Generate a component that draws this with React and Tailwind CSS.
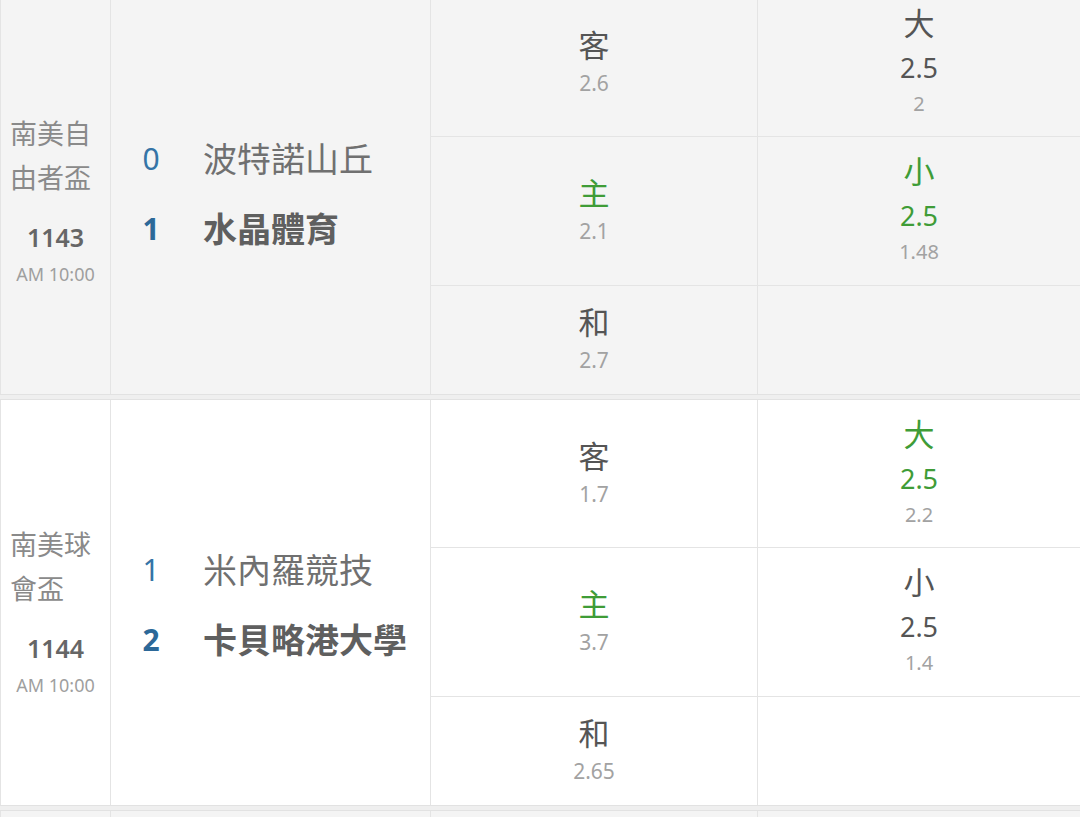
import React from 'react';

const matches = [
  {
    league: ['南美自', '由者盃'],
    no: '1143',
    time: 'AM 10:00',
    shade: true,
    away: { score: '0', name: '波特諾山丘' },
    home: { score: '1', name: '水晶體育' },
    odds: [
      { label: '客', value: '2.6' },
      { label: '主', value: '2.1', hot: true },
      { label: '和', value: '2.7' },
    ],
    totals: [
      { label: '大', line: '2.5', value: '2' },
      { label: '小', line: '2.5', value: '1.48', hot: true },
    ],
  },
  {
    league: ['南美球', '會盃'],
    no: '1144',
    time: 'AM 10:00',
    shade: false,
    away: { score: '1', name: '米內羅競技' },
    home: { score: '2', name: '卡貝略港大學' },
    odds: [
      { label: '客', value: '1.7' },
      { label: '主', value: '3.7', hot: true },
      { label: '和', value: '2.65' },
    ],
    totals: [
      { label: '大', line: '2.5', value: '2.2', hot: true },
      { label: '小', line: '2.5', value: '1.4' },
    ],
  },
];

const cellHeights = ['h-[148px]', 'h-[149px]', 'flex-1'];

function OddsCell({ item, idx }) {
  return (
    <div className={`${cellHeights[idx]} flex flex-col items-center justify-center ${idx < 2 ? 'border-b border-[#e4e4e4]' : ''}`}>
      {item && (
        <>
          <span className={`text-[31px] leading-[40px] ${item.hot ? 'text-[#3f9c37]' : 'text-[#555]'}`}>{item.label}</span>
          <span className="text-[21px] leading-[36px] text-[#a2a2a2]">{item.value}</span>
        </>
      )}
    </div>
  );
}

function TotalCell({ item, idx }) {
  return (
    <div className={`${cellHeights[idx]} flex flex-col items-center justify-center pb-[8px] ${idx < 2 ? 'border-b border-[#e4e4e4]' : ''}`}>
      {item && (
        <>
          <span className={`text-[31px] leading-[50px] ${item.hot ? 'text-[#3f9c37]' : 'text-[#555]'}`}>{item.label}</span>
          <span className={`text-[27px] leading-[40px] ${item.hot ? 'text-[#3f9c37]' : 'text-[#555]'}`}>{item.line}</span>
          <span className="text-[20px] leading-[32px] text-[#a2a2a2]">{item.value}</span>
        </>
      )}
    </div>
  );
}

function MatchRow({ m }) {
  return (
    <div className={`grid grid-cols-[110px_320px_327px_323px] h-[407px] border-y border-[#e2e2e2] ${m.shade ? 'bg-[#f4f4f4]' : 'bg-white'}`}>
      <div className="border-l border-[#e4e4e4] flex flex-col justify-center pt-[16px]">
        <div className="pl-[9px] text-[27px] leading-[44px] text-[#8a8a8a]">
          {m.league.map((l) => (
            <div key={l}>{l}</div>
          ))}
        </div>
        <div className="mt-[20px] text-center text-[25px] leading-[34px] font-semibold text-[#666]">{m.no}</div>
        <div className="mt-[7px] text-center text-[18px] leading-[26px] text-[#9f9f9f]">{m.time}</div>
      </div>
      <div className="border-l border-[#e4e4e4] flex flex-col justify-center gap-[22px] pl-[20px] pt-[4px]">
        <div className="flex items-center">
          <span className="w-[40px] text-center text-[30px] leading-[48px] text-[#3574a6]">{m.away.score}</span>
          <span className="ml-[32px] text-[34px] leading-[48px] text-[#707070]">{m.away.name}</span>
        </div>
        <div className="flex items-center">
          <span className="w-[40px] text-center text-[30px] leading-[48px] font-bold text-[#2c6898]">{m.home.score}</span>
          <span className="ml-[32px] text-[34px] leading-[48px] font-bold text-[#5f5f5f]">{m.home.name}</span>
        </div>
      </div>
      <div className="border-l border-[#e4e4e4] flex flex-col">
        {m.odds.map((o, i) => (
          <OddsCell key={i} item={o} idx={i} />
        ))}
      </div>
      <div className="border-l border-[#e4e4e4] flex flex-col">
        {[0, 1, 2].map((i) => (
          <TotalCell key={i} item={m.totals[i]} idx={i} />
        ))}
      </div>
    </div>
  );
}

export default function App() {
  return (
    <div
      className="h-[817px] w-[1080px] overflow-hidden bg-[#efefef]"
      style={{ fontFamily: '"Noto Sans", "Noto Sans CJK TC", sans-serif' }}
    >
      <div className="-mt-[12px] flex flex-col gap-[4px]">
        {matches.map((m) => (
          <MatchRow key={m.no} m={m} />
        ))}
        <div className="grid grid-cols-[110px_320px_327px_323px] h-[60px] border-t border-[#e2e2e2] bg-[#f4f4f4]">
          <div className="border-l border-[#e4e4e4]" />
          <div className="border-l border-[#e4e4e4]" />
          <div className="border-l border-[#e4e4e4]" />
          <div className="border-l border-[#e4e4e4]" />
        </div>
      </div>
    </div>
  );
}
